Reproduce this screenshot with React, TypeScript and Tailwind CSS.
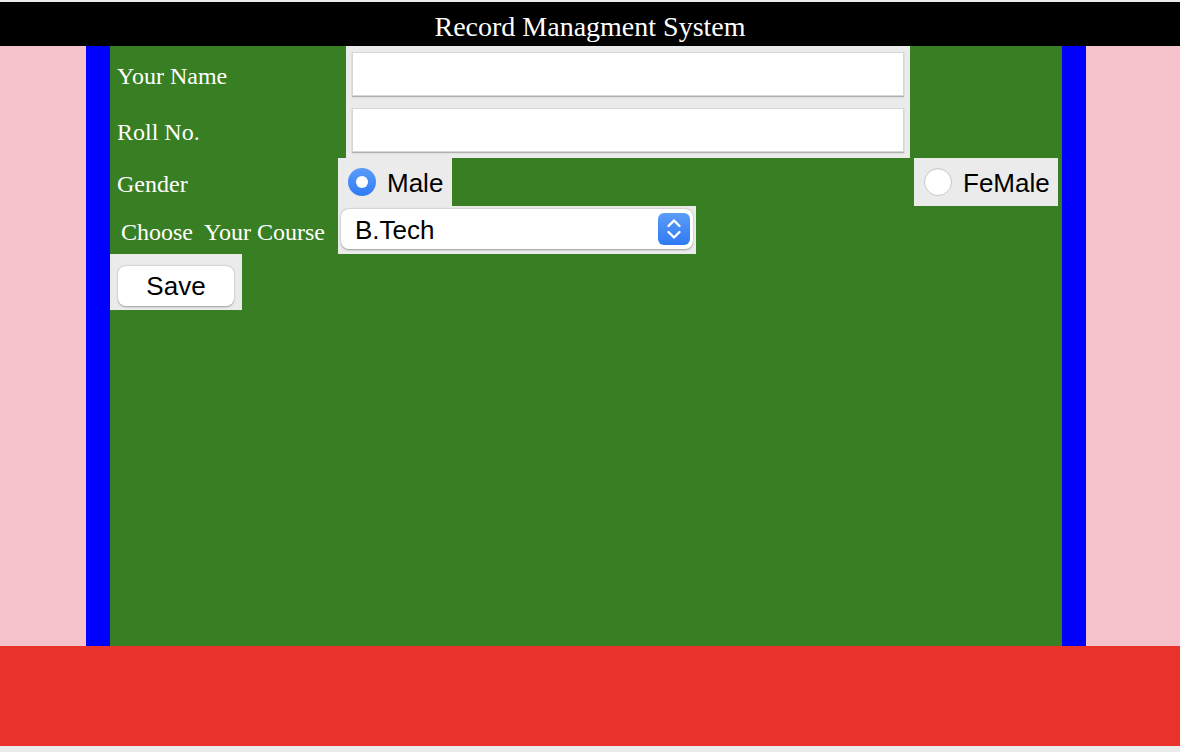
import React from "react";

const serif = { fontFamily: '"Liberation Serif", "Times New Roman", serif' };

function Radio({ checked }: { checked?: boolean }) {
  if (checked) {
    return (
      <span className="flex h-[28px] w-[28px] items-center justify-center rounded-full bg-gradient-to-b from-[#5b9cf8] to-[#2f7af5]">
        <span className="h-[12px] w-[12px] rounded-full bg-white" />
      </span>
    );
  }
  return (
    <span className="h-[28px] w-[28px] rounded-full border border-[#c9c9c9] bg-white shadow-[inset_0_1px_1px_rgba(0,0,0,0.06)]" />
  );
}

function TextInput() {
  return (
    <input
      type="text"
      className="h-[44px] w-[552px] border border-[#d6d6d6] bg-white shadow-[0_1px_1px_rgba(0,0,0,0.25)] outline-none"
    />
  );
}

export default function App() {
  return (
    <div
      className="flex h-[752px] w-[1180px] flex-col bg-[#ebebeb] pt-[2px]"
      style={{ fontFamily: '"Liberation Sans", Arial, sans-serif' }}
    >
      <header
        className="flex h-[44px] items-center justify-center bg-black pt-[5px] text-[28px] leading-none text-white"
        style={serif}
      >
        Record Managment System
      </header>

      <div className="flex h-[600px] bg-[#f5c2cb] pl-[86px]">
        <div className="flex h-full w-[1000px] flex-col border-x-[24px] border-[#0000ff] bg-[#387e22]">
          {/* Rows 1-2 */}
          <div className="flex">
            <div className="flex w-[236px] flex-col text-[24px] text-white" style={serif}>
              <div className="flex h-[56px] items-center pl-[7px] pt-[4px]">Your Name</div>
              <div className="flex h-[56px] items-center pl-[7px] pt-[4px]">Roll No.</div>
            </div>
            <div className="flex flex-col gap-[12px] bg-[#ebebeb] p-[6px]">
              <TextInput />
              <TextInput />
            </div>
          </div>

          {/* Row 3: gender */}
          <div className="flex h-[48px] pr-[4px]">
            <div className="flex w-[228px] items-center pl-[7px] pt-[4px] text-[24px] text-white" style={serif}>
              Gender
            </div>
            <label className="flex w-[114px] items-center gap-[11px] bg-[#ebebeb] pl-[10px] text-[26px] text-black">
              <Radio checked />
              <span className="pt-[3px]">Male</span>
            </label>
            <div className="flex-1" />
            <label className="flex w-[144px] items-center gap-[11px] bg-[#ebebeb] pl-[10px] text-[26px] text-black">
              <Radio />
              <span className="pt-[3px]">FeMale</span>
            </label>
          </div>

          {/* Row 4: course */}
          <div className="flex h-[48px]">
            <div
              className="flex w-[228px] items-center whitespace-pre pl-[11px] pt-[4px] text-[24px] text-white"
              style={serif}
            >
              {"Choose  Your Course"}
            </div>
            <div className="w-[358px] bg-[#ebebeb] px-[3px] pt-[3px]">
              <div className="flex h-[40px] w-[352px] items-center justify-between rounded-[8px] bg-white pl-[14px] pr-[3px] text-[26px] text-black shadow-[0_0.5px_2px_rgba(0,0,0,0.35)]">
                <span className="pt-[3px]">B.Tech</span>
                <span className="flex h-[32px] w-[32px] items-center justify-center rounded-[6px] bg-gradient-to-b from-[#5b9cf8] to-[#2f7af5]">
                  <svg width="18" height="26" viewBox="0 0 18 26" fill="none">
                    <path d="M3.5 10 L9 4.5 L14.5 10" stroke="white" strokeWidth="2.4" strokeLinecap="round" strokeLinejoin="round" />
                    <path d="M3.5 16 L9 21.5 L14.5 16" stroke="white" strokeWidth="2.4" strokeLinecap="round" strokeLinejoin="round" />
                  </svg>
                </span>
              </div>
            </div>
          </div>

          {/* Row 5: save */}
          <div className="flex">
            <div className="h-[56px] w-[132px] bg-[#ebebeb] px-[8px] pt-[12px]">
              <button className="flex h-[40px] w-[116px] items-center justify-center rounded-[8px] bg-white pt-[1px] text-[26px] text-black shadow-[0_0.5px_2px_rgba(0,0,0,0.35)]">
                Save
              </button>
            </div>
          </div>
        </div>
      </div>

      <footer className="h-[100px] bg-[#e9332a]" />
    </div>
  );
}
